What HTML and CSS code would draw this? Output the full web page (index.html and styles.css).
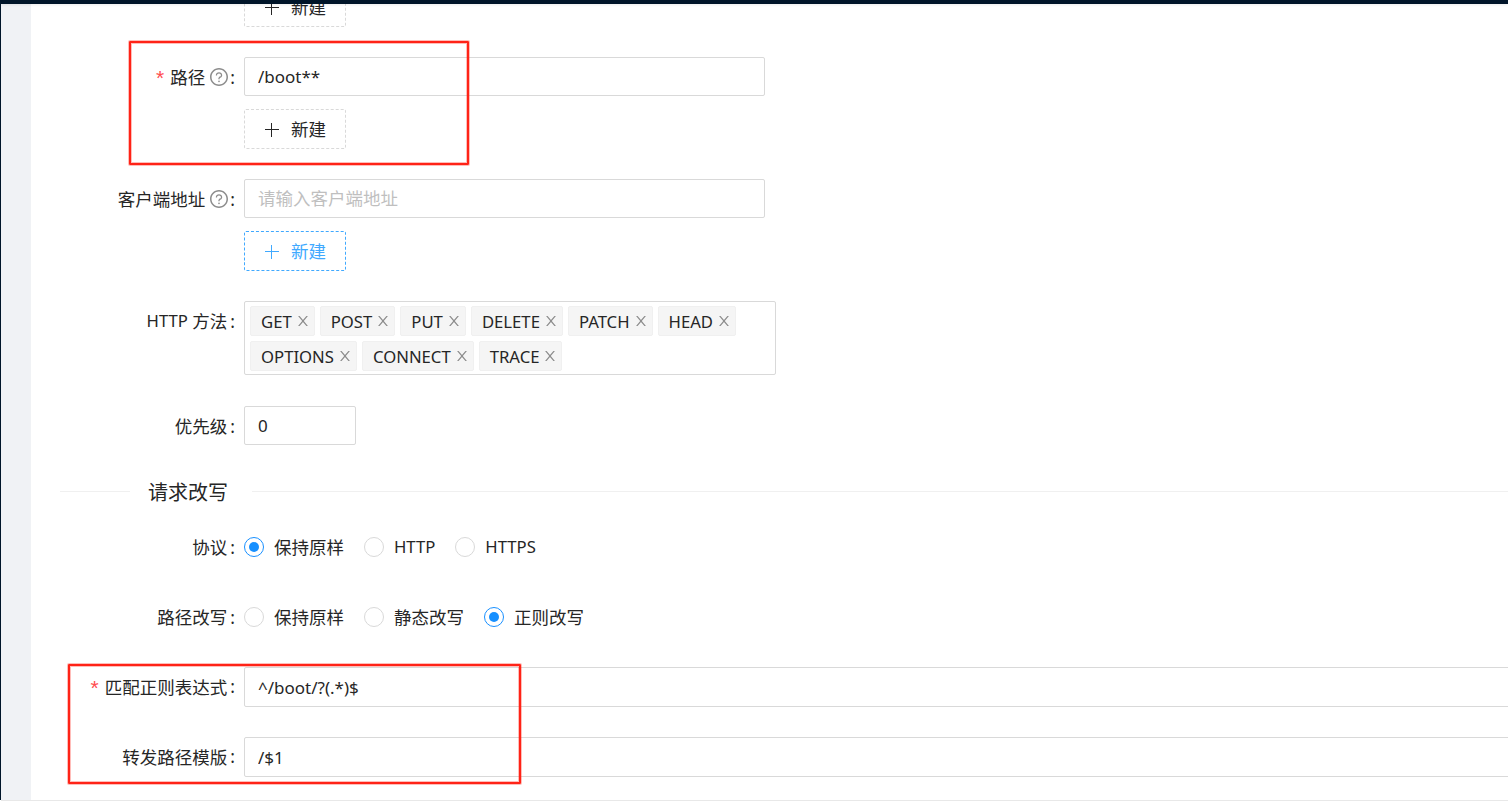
FILE: index.html
```html
<!DOCTYPE html>
<html lang="zh-CN">
<head>
<meta charset="utf-8">
<title>路由配置</title>
<link rel="stylesheet" href="styles.css">
</head>
<body>
<svg class="defs" width="0" height="0" aria-hidden="true">
  <symbol id="i-help" viewBox="64 64 896 896">
    <path d="M512 64C264.6 64 64 264.6 64 512s200.6 448 448 448 448-200.6 448-448S759.4 64 512 64zm0 820c-205.4 0-372-166.6-372-372s166.6-372 372-372 372 166.6 372 372-166.6 372-372 372z"/>
    <path d="M623.6 316.7C593.6 290.4 554 276 512 276s-81.6 14.5-111.6 40.7C369.2 344 352 380.7 352 420v7.6c0 4.4 3.6 8 8 8h48c4.4 0 8-3.6 8-8V420c0-44.1 43.1-80 96-80s96 35.9 96 80c0 31.1-22 59.6-56.1 72.7-21.2 8.1-39.2 22.3-52.1 40.9-13.1 19-19.9 41.8-19.9 64.9V620c0 4.4 3.6 8 8 8h48c4.4 0 8-3.6 8-8v-22.7a48.3 48.3 0 0 1 30.9-44.8c59-22.7 97.1-74.7 97.1-132.5.1-39.3-17.1-76-48.3-103.3z"/>
    <path d="M472 732a40 40 0 1 0 80 0 40 40 0 1 0-80 0z"/>
  </symbol>
  <symbol id="i-plus" viewBox="0 0 14 14">
    <path d="M6.5 0v14M0 6.5h14"/>
  </symbol>
  <symbol id="i-close" viewBox="64 64 896 896">
    <path d="M563.8 512l262.5-312.9c4.4-5.2.7-13.1-6.1-13.1h-79.8c-4.7 0-9.2 2.1-12.3 5.7L511.6 449.8 295.1 191.7c-3-3.6-7.5-5.7-12.3-5.7H203c-6.8 0-10.5 7.9-6.1 13.1L459.4 512 196.9 824.9A7.95 7.95 0 0 0 203 838h79.8c4.7 0 9.2-2.1 12.3-5.7l216.5-258.1 216.5 258.1c3 3.6 7.5 5.7 12.3 5.7h79.8c6.8 0 10.5-7.9 6.1-13.1L563.8 512z"/>
  </symbol>
</svg>

<div class="topbar"></div>
<div class="shell">
  <div class="rail"></div>
  <div class="gutter"></div>
  <main class="content">
    <form class="form">
      <div class="row row-clipped">
        <div class="label"></div>
        <div class="control">
          <button type="button" class="add"><svg class="plus"><use href="#i-plus"/></svg><span>新建</span></button>
        </div>
      </div>

      <div class="row gap-30">
        <label class="label"><span class="req">*</span>路径<svg class="help"><use href="#i-help"/></svg><span class="colon">:</span></label>
        <div class="control">
          <input class="input w-path" value="/boot**">
          <button type="button" class="add stacked"><svg class="plus"><use href="#i-plus"/></svg><span>新建</span></button>
        </div>
      </div>

      <div class="row gap-30">
        <label class="label">客户端地址<svg class="help"><use href="#i-help"/></svg><span class="colon">:</span></label>
        <div class="control">
          <input class="input w-path" placeholder="请输入客户端地址">
          <button type="button" class="add stacked is-focus"><svg class="plus"><use href="#i-plus"/></svg><span>新建</span></button>
        </div>
      </div>

      <div class="row gap-30">
        <label class="label"><span class="latin">HTTP&nbsp;</span>方法<span class="colon">:</span></label>
        <div class="control">
          <div class="select">
            <span class="tag latin">GET<svg class="x"><use href="#i-close"/></svg></span>
            <span class="tag latin">POST<svg class="x"><use href="#i-close"/></svg></span>
            <span class="tag latin">PUT<svg class="x"><use href="#i-close"/></svg></span>
            <span class="tag latin">DELETE<svg class="x"><use href="#i-close"/></svg></span>
            <span class="tag latin">PATCH<svg class="x"><use href="#i-close"/></svg></span>
            <span class="tag latin">HEAD<svg class="x"><use href="#i-close"/></svg></span>
            <span class="tag latin">OPTIONS<svg class="x"><use href="#i-close"/></svg></span>
            <span class="tag latin">CONNECT<svg class="x"><use href="#i-close"/></svg></span>
            <span class="tag latin">TRACE<svg class="x"><use href="#i-close"/></svg></span>
          </div>
        </div>
      </div>

      <div class="row gap-31">
        <label class="label">优先级<span class="colon">:</span></label>
        <div class="control">
          <input class="input w-num" value="0">
        </div>
      </div>

      <div class="divider">
        <span class="divider-line short"></span>
        <span class="divider-title">请求改写</span>
        <span class="divider-line long"></span>
      </div>

      <div class="row">
        <label class="label nudge">协议<span class="colon">:</span></label>
        <div class="control radios">
          <span class="radio"><i class="dot on"></i>保持原样</span>
          <span class="radio"><i class="dot"></i><span class="latin">HTTP</span></span>
          <span class="radio"><i class="dot"></i><span class="latin">HTTPS</span></span>
        </div>
      </div>

      <div class="row gap-31">
        <label class="label nudge">路径改写<span class="colon">:</span></label>
        <div class="control radios">
          <span class="radio"><i class="dot"></i>保持原样</span>
          <span class="radio"><i class="dot"></i>静态改写</span>
          <span class="radio"><i class="dot on"></i>正则改写</span>
        </div>
      </div>

      <div class="row gap-30">
        <label class="label tall nudge"><span class="req">*</span>匹配正则表达式<span class="colon">:</span></label>
        <div class="control">
          <input class="input w-full tall" value="^/boot/?(.*)$">
        </div>
      </div>

      <div class="row gap-30">
        <label class="label tall nudge">转发路径模版<span class="colon">:</span></label>
        <div class="control">
          <input class="input w-full tall" value="/$1">
        </div>
      </div>
    </form>
  </main>
</div>
<div class="footer"></div>

<div class="mark mark-path"></div>
<div class="mark mark-rewrite"></div>
</body>
</html>
```
FILE: styles.css
```css
* { box-sizing: border-box; }

html, body {
  margin: 0;
  height: 100%;
  overflow: hidden;
  background: #fff;
}

body {
  position: relative;
  display: flex;
  flex-direction: column;
  font-family: "Noto Sans", "Noto Sans CJK SC", sans-serif;
  font-size: 17.5px;
  color: #262626;
}

.latin { font-size: 16.7px; }

.defs { position: absolute; }

.topbar {
  position: absolute;
  top: 0;
  left: 0;
  right: 0;
  height: 4px;
  background: #001529;
  box-shadow: 0 1px 3px rgba(0, 0, 0, .08);
  z-index: 2;
}

.shell {
  flex: 1;
  display: flex;
  min-height: 0;
}

.rail { width: 1px; background: #001529; }
.gutter { width: 30px; background: #f0f2f5; }

.content {
  flex: 1;
  min-width: 0;
  overflow: hidden;
  background: #fff;
}

.form { margin-top: -13px; }

.row { display: flex; align-items: flex-start; }
.gap-30 { margin-top: 30px; }
.gap-31 { margin-top: 31px; }

.label {
  flex: none;
  width: 213px;
  height: 39px;
  padding-right: 9px;
  display: flex;
  align-items: center;
  justify-content: flex-end;
  white-space: nowrap;
}
.label.tall { height: 40px; }
.label.nudge { padding-bottom: 2px; }

.req {
  color: #ff4d4f;
  margin-right: 6px;
  padding-top: 2px;
  font-size: 21px;
  line-height: 1;
  font-family: "Liberation Sans", sans-serif;
}

.colon { margin-left: 3px; }
.help + .colon { margin-left: 2px; }

.help {
  width: 18px;
  height: 18px;
  margin-left: 5px;
  fill: #8c8c8c;
}

.control { flex: none; display: flex; flex-direction: column; align-items: flex-start; }

.input {
  display: block;
  height: 39px;
  padding: 0 13px;
  border: 1px solid #d9d9d9;
  border-radius: 2px;
  background: #fff;
  font: inherit;
  font-size: 17px;
  color: #262626;
  outline: none;
}
.input.tall { height: 40px; }
.input::placeholder { color: #bfbfbf; font-size: 17.5px; }
.w-path { width: 521px; }
.w-num { width: 112px; }
.w-full { width: 1400px; }

.add {
  display: flex;
  align-items: center;
  width: 102px;
  height: 40px;
  padding: 0 0 2px 20px;
  border: 1px dashed #d9d9d9;
  border-radius: 2px;
  background: #fff;
  font: inherit;
  color: #262626;
}
.add.stacked { margin-top: 13px; }
.add.is-focus { border-color: #40a9ff; color: #40a9ff; }

.plus {
  width: 14px;
  height: 14px;
  margin: 4px 12px 0 0;
  fill: none;
  stroke: currentColor;
  stroke-width: 1;
}

.select {
  width: 532px;
  height: 74px;
  padding: 4px 5px;
  border: 1px solid #d9d9d9;
  border-radius: 2px;
  display: flex;
  flex-wrap: wrap;
  align-content: flex-start;
  gap: 5px;
}

.tag {
  display: flex;
  align-items: center;
  height: 30px;
  padding: 0 4px 0 10px;
  background: #f5f5f5;
  border: 1px solid #f0f0f0;
  border-radius: 2px;
  white-space: nowrap;
}

.x {
  width: 14px;
  height: 14px;
  margin-left: 4px;
  fill: #8c8c8c;
}

.divider {
  display: flex;
  align-items: center;
  height: 30px;
  margin: 31px 0 22px;
  margin-left: 29px;
  font-size: 20px;
}
.divider-line { height: 1px; background: #f0f0f0; }
.divider-line.short { flex: none; width: 70px; }
.divider-line.long { flex: 1; }
.divider-title { padding: 0 24px 0 18px; }

.radios {
  flex-direction: row;
  align-items: center;
  height: 39px;
  padding-bottom: 1px;
  gap: 20px;
}

.radio {
  display: flex;
  align-items: center;
  padding-bottom: 2px;
  white-space: nowrap;
}

.dot {
  width: 20px;
  height: 20px;
  margin: 2px 10px 0 0;
  border: 1px solid #d9d9d9;
  border-radius: 50%;
  display: flex;
  align-items: center;
  justify-content: center;
}
.dot.on { border-color: #1890ff; }
.dot.on::after {
  content: "";
  width: 10px;
  height: 10px;
  border-radius: 50%;
  background: #1890ff;
}

.footer {
  flex: none;
  height: 6px;
  margin-left: 1px;
  background: #fff;
  border-top: 1px solid #e8e8e8;
}

.mark {
  position: absolute;
  border: 2px solid #ff2317;
  box-shadow: 0 0 0 1px rgba(255, 35, 23, .3), inset 0 0 0 1px rgba(255, 35, 23, .3);
  border-radius: 1px;
  pointer-events: none;
}
.mark-path { left: 129px; top: 41px; width: 340px; height: 124px; }
.mark-rewrite { left: 68px; top: 664px; width: 453px; height: 120px; }
```
